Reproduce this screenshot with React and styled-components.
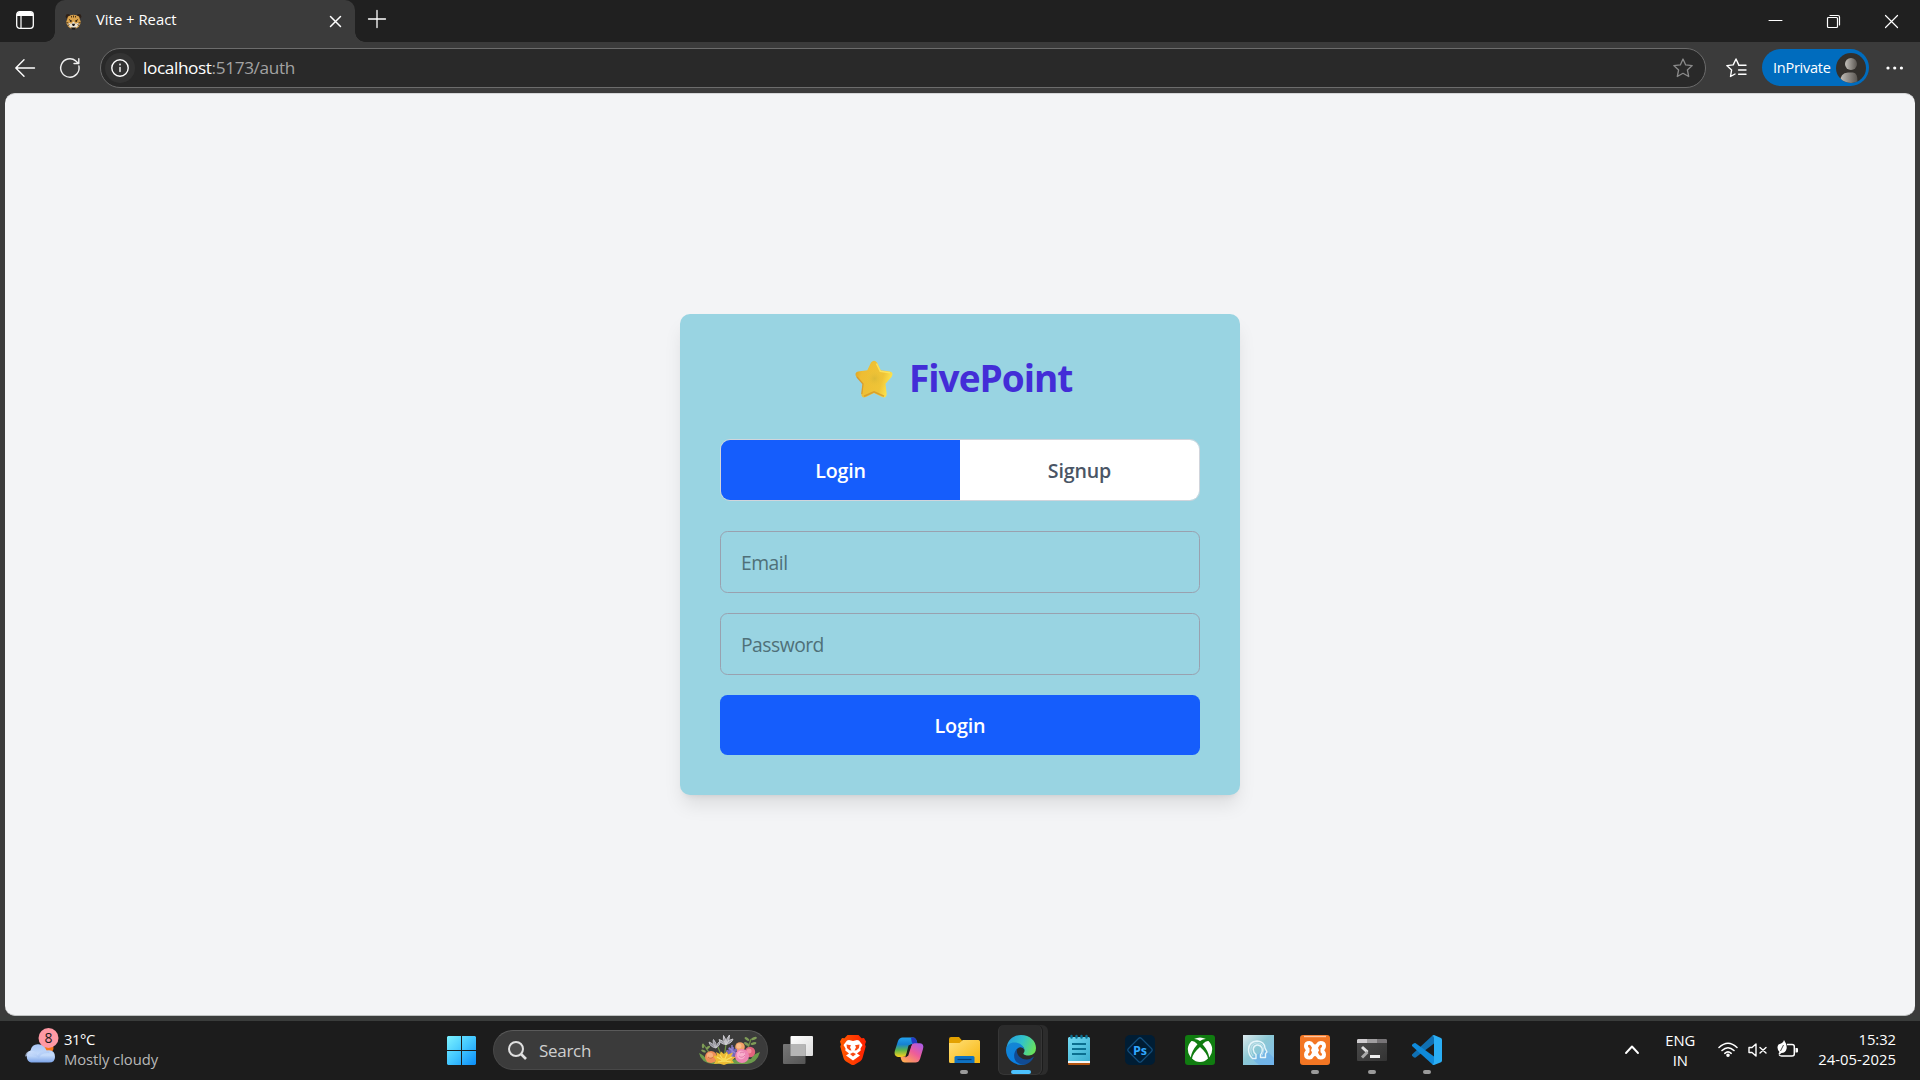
import React from "react";
import styled, { createGlobalStyle } from "styled-components";

const Global = createGlobalStyle`
  * { box-sizing: border-box; }
  html, body { margin: 0; height: 100%; overflow: hidden; background: #3b3b3b; }
  body { font-family: "Open Sans", "Noto Sans", sans-serif; }
  button, input { font: inherit; margin: 0; }
  svg { display: block; flex: none; overflow: visible; }
`;

const Screen = styled.div`
  width: 1920px;
  height: 1080px;
  display: flex;
  flex-direction: column;
  background: #3b3b3b;
`;

/* ---------- browser chrome ---------- */
const TabStrip = styled.div`
  height: 42px;
  flex: none;
  display: flex;
  background: #202020;
`;
const WorkspaceSlot = styled.div`
  width: 55px;
  padding: 11px 0 0 16px;
  background: #202020;
`;
const Tab = styled.div`
  position: relative;
  width: 300px;
  height: 42px;
  padding: 0 14px 0 10px;
  display: flex;
  align-items: center;
  background: #3b3b3b;
  border-radius: 10px 10px 0 0;
  &::before, &::after {
    content: "";
    position: absolute;
    bottom: 0;
    width: 10px;
    height: 10px;
  }
  &::before { left: -10px; background: radial-gradient(circle at 0 0, #202020 9.5px, #3b3b3b 10px); }
  &::after { right: -10px; background: radial-gradient(circle at 100% 0, #202020 9.5px, #3b3b3b 10px); }
`;
const Label = styled.span`
  white-space: pre;
  line-height: 20px;
  font-size: ${(p) => p.$size || 15}px;
  letter-spacing: ${(p) => p.$track || 0}px;
  font-weight: ${(p) => p.$weight || 400};
  color: ${(p) => p.$color || "#fff"};
`;
const TabTitle = styled(Label)`
  flex: 1;
  margin: -4px 0 0 14px;
`;
const NewTab = styled.div`
  padding: 10px 0 0 13px;
  flex: 1;
`;
const WindowControls = styled.div`
  display: flex;
  gap: 45px;
  padding: 15px 22px 0 0;
`;
const Toolbar = styled.div`
  height: 51px;
  flex: none;
  display: flex;
  align-items: center;
  padding: 0 17px 0 15px;
  background: #3b3b3b;
`;
const ReloadIcon = styled.svg`
  margin-left: 25px;
`;
const FavoritesIcon = styled.svg`
  margin-left: 20px;
`;
const AddressBar = styled.div`
  width: 1606px;
  height: 40px;
  margin-left: 20px;
  padding: 0 12px 0 4px;
  display: flex;
  align-items: center;
  background: #292929;
  border: 1px solid #6c6c6c;
  border-radius: 20px;
`;
const InfoHalo = styled.div`
  width: 30px;
  height: 30px;
  display: grid;
  place-items: center;
  border-radius: 50%;
  background: #333;
`;
const Url = styled.div`
  flex: 1;
  margin: 0 0 0 8px;
  display: flex;
`;
const PrivatePill = styled.div`
  width: 107px;
  height: 37px;
  margin: 0 17px 0 15px;
  padding: 0 3px 0 11px;
  display: flex;
  align-items: center;
  justify-content: space-between;
  border-radius: 19px;
  background: #006cbe;
`;

/* ---------- page ---------- */
const Viewport = styled.main`
  height: 923px;
  flex: none;
  margin: 0 5px;
  display: flex;
  align-items: center;
  justify-content: center;
  background: #f3f4f6;
  border-radius: 10px;
  border-top: 1px solid #d5d6d8;
  border-bottom: 1px solid #bfc2c2;
`;
const Card = styled.section`
  width: 560px;
  height: 481px;
  padding: 40px;
  display: flex;
  flex-direction: column;
  background: #99d4e2;
  border-radius: 10px;
  box-shadow: 0 12.5px 18.75px -3.75px rgba(0, 0, 0, 0.1), 0 5px 7.5px -5px rgba(0, 0, 0, 0.1);
`;
const Brand = styled.h1`
  height: 45px;
  margin: 0 0 40px;
  padding: 5px 0 0 135px;
  display: flex;
  align-items: center;
  gap: 16px;
`;
const BrandName = styled.span`
  margin-top: -4px;
  font-size: 37px;
  line-height: 45px;
  font-weight: 700;
  letter-spacing: -1px;
  color: #432dd7;
`;
const Toggle = styled.div`
  height: 62px;
  flex: none;
  display: flex;
  margin-bottom: 30px;
  border: 1px solid #d1d5dc;
  border-radius: 10px;
  overflow: hidden;
`;
const ToggleButton = styled.button`
  flex: 1;
  padding: 0;
  border: 0;
  font-size: 19.6px;
  letter-spacing: -0.15px;
  font-weight: 600;
  color: ${(p) => (p.$active ? "#fff" : "#4a5565")};
  background: ${(p) => (p.$active ? "#155dfc" : "#fff")};
`;
const Field = styled.input`
  width: 480px;
  height: 62px;
  flex: none;
  margin-bottom: 20px;
  padding: 0 20px;
  border: 1px solid #99a1af;
  border-radius: 7.5px;
  outline: 0;
  background: transparent;
  font-size: 19.3px;
  letter-spacing: -0.5px;
  &::placeholder { color: #4f7078; opacity: 1; }
`;
const Submit = styled.button`
  height: 60px;
  flex: none;
  padding: 0;
  border: 0;
  border-radius: 7.5px;
  background: #155dfc;
  color: #fff;
  font-size: 19.8px;
  font-weight: 600;
  letter-spacing: -0.2px;
`;

/* ---------- taskbar ---------- */
const Gutter = styled.div`
  height: 5px;
  flex: none;
  background: #3a3c3b;
`;
const Taskbar = styled.footer`
  height: 59px;
  flex: none;
  display: flex;
  background: #1c1c1c;
`;
const Weather = styled.div`
  width: 447px;
  padding: 6px 0 0 24px;
  display: flex;
`;
const Stack = styled.div`
  display: flex;
  flex-direction: column;
  align-items: ${(p) => p.$align || "flex-start"};
  padding-top: ${(p) => p.$top || 2}px;
  margin-left: ${(p) => p.$left || 0}px;
`;
const SearchBox = styled.div`
  width: 275px;
  height: 40px;
  margin: 9px 15px 0 17px;
  padding: 0 7px 0 14px;
  display: flex;
  align-items: center;
  border-radius: 20px;
  background: #3b3b3b;
  border: 1px solid #484848;
  border-top-color: #5a5a5a;
`;
const SearchLabel = styled(Label)`
  flex: 1;
  margin: 1px 0 0 12px;
`;
const StartButton = styled.div`
  padding-top: 15px;
`;
const AppSlot = styled.div`
  width: ${(p) => p.$w}px;
  margin-left: ${(p) => p.$gap}px;
  display: flex;
  flex-direction: column;
  align-items: center;
  padding-top: 14px;
`;
const ActiveTile = styled.div`
  width: 44px;
  height: 50px;
  margin: -10px 3px 0 0;
  padding: 10px 0 0 3px;
  display: flex;
  flex-direction: column;
  align-items: center;
  border-radius: 6px;
  border: 1px solid #363636;
  border-top-width: 0;
  background: #2b2b2b;
  box-shadow: 1px 0 0 #1c1c1c, 6px 0 0 0 #2c2c2c;
`;
const Indicator = styled.div`
  width: ${(p) => (p.$wide ? 20 : 8)}px;
  height: 4px;
  margin-top: 5px;
  border-radius: 2px;
  background: ${(p) => (p.$wide ? "#4cc2ff" : "#9a9a9a")};
`;
const Tray = styled.div`
  margin-left: auto;
  padding-right: 24px;
  display: flex;
`;
const TrayIcon = styled.div`
  padding-top: ${(p) => p.$top}px;
  margin-left: ${(p) => p.$left}px;
`;

/* ---------- icons ---------- */
const Line = ({ w, h, d, sw = 1.4, c = "#fff", children }) => (
  <svg width={w} height={h} viewBox={`0 0 ${w} ${h}`} fill="none" stroke={c} strokeWidth={sw} strokeLinecap="round" strokeLinejoin="round">
    {d && <path d={d} />}
    {children}
  </svg>
);

const Leopard = () => (
  <svg width="17" height="17" viewBox="0 0 17 17">
    <circle cx="3" cy="3.4" r="2.4" fill="#2e2119" />
    <circle cx="14" cy="3.4" r="2.4" fill="#2e2119" />
    <path d="M3 3.5Q8.500 0 14 3.500L15.800 9Q15 14 11 15.500H6Q2 14 1.200 9Z" fill="#d9a24b" />
    <path d="M2.600 10.500Q5 9.500 6 11L8.500 8.500 11 11Q12 9.500 14.400 10.500 13 14.500 8.500 15.500 4 14.500 2.600 10.500Z" fill="#e9e0cf" />
    <path d="M4 6.500l2 1.200M13 6.500l-2 1.200M1.500 9.500l2 .6M15.500 9.500l-2 .6M2.500 12.500l2-.8M14.500 12.500l-2-.8M6.500 3v1.500M10.500 3v1.500M8.500 2.500v2" stroke="#4a3216" strokeWidth="1" />
    <circle cx="5.800" cy="8" r="1" fill="#342613" />
    <circle cx="11.200" cy="8" r="1" fill="#342613" />
    <path d="M6.800 10.800h3.400L9.200 13H7.800ZM6 14.500h5l-1 1.900H7Z" fill="#1c1916" />
  </svg>
);

const Avatar = () => (
  <svg width="30" height="30" viewBox="0 0 30 30">
    <defs>
      <linearGradient id="av" x1="0" x2="1"><stop offset="0" stopColor="#c4c0ba" /><stop offset="1" stopColor="#5a5651" /></linearGradient>
      <clipPath id="avc"><circle cx="15" cy="15" r="15" /></clipPath>
    </defs>
    <circle cx="15" cy="15" r="15" fill="#33302c" />
    <g clipPath="url(#avc)" fill="url(#av)">
      <circle cx="15" cy="11" r="6" />
      <path d="M4 30Q4 19.500 12 19.500H17Q22 19.500 21.500 30Z" />
    </g>
  </svg>
);

const GoldStar = () => (
  <svg width="38" height="38" viewBox="0 0 38 38">
    <defs>
      <linearGradient id="gs" x1="0" y1="0" x2="1" y2="0.300"><stop offset="0" stopColor="#d99b20" /><stop offset="0.250" stopColor="#eebd33" /><stop offset="0.800" stopColor="#efc437" /><stop offset="1" stopColor="#fbe04a" /></linearGradient>
      <radialGradient id="gc"><stop offset="0" stopColor="#dcb936" /><stop offset="1" stopColor="#efc437" stopOpacity="0" /></radialGradient>
    </defs>
    <path d="M16 2.500Q19 -1.200 22 2.500L25.700 10.300 35 11.600Q39.200 13 36.500 17L30.500 23.800 31.700 34Q31.200 38.800 27 37L19 33 11 37Q6.800 38.800 6.300 34L7.500 23.800 1.300 17Q-1 13 3 11.600L12.300 10.300Z" fill="url(#gs)" />
    <path d="M6.800 34L8 24 2 17" fill="none" stroke="#d08f2a" strokeWidth="1.300" opacity="0.700" />
    <path d="M9 36.300L19 31.800 29 36.300" fill="none" stroke="#cf9129" strokeWidth="1.500" opacity="0.700" />
    <path d="M21.500 3.500L25.300 11.200 35 12.700" fill="none" stroke="#ffe862" strokeWidth="1.600" opacity="0.800" />
    <circle cx="19.500" cy="18.500" r="9" fill="url(#gc)" />
  </svg>
);

const WeatherIcon = () => (
  <svg width="36" height="38" viewBox="0 0 36 38">
    <defs>
      <linearGradient id="cl" x1="0" y1="0" x2="0" y2="1"><stop offset="0" stopColor="#a9c6f5" /><stop offset="0.600" stopColor="#c6dcfb" /><stop offset="1" stopColor="#7ba3e8" /></linearGradient>
      <linearGradient id="cl2" x1="0" y1="0" x2="1" y2="1"><stop offset="0" stopColor="#dbe9ff" /><stop offset="1" stopColor="#8fb3ef" /></linearGradient>
    </defs>
    <circle cx="23.500" cy="21" r="6" fill="#f7761b" />
    <path d="M7 35.500A6.500 6.500 0 0 1 6.500 23.500Q8 17 14 17.200 20 17 22.500 23.500 31 22 31 30 31 35.500 25 35.500Z" fill="url(#cl)" />
    <path d="M1 29.500Q2 24 7 23.800 12 24 13.500 28 17 23.500 22 23.600 27 24.500 25 26 17 25.500 15 31 10 27 1 29.500Z" fill="url(#cl2)" opacity="0.700" />
    <circle cx="24.500" cy="11" r="10" fill="#ff99a4" />
    <text x="24.600" y="16" textAnchor="middle" fontSize="14" fontFamily="Open Sans" fill="#1a1a1a">8</text>
  </svg>
);

const WindowsLogo = () => (
  <svg width="29" height="29" viewBox="0 0 29 29">
    <defs><linearGradient id="wl" x1="0" y1="0" x2="29" y2="29" gradientUnits="userSpaceOnUse"><stop offset="0" stopColor="#7df3ff" /><stop offset="0.500" stopColor="#42c6ff" /><stop offset="1" stopColor="#0a8cf7" /></linearGradient></defs>
    <path d="M1 0H14V14H0V1ZM15 0H28L29 1V14H15ZM0 15H14V29H1L0 28ZM15 15H29V28L28 29H15Z" fill="url(#wl)" />
  </svg>
);

const petals = (cx, cy, r, n, color, w = 2) =>
  Array.from({ length: n }, (_, i) => {
    const a = (i / n) * Math.PI * 2;
    return <line key={`${cx}-${i}`} x1={cx} y1={cy} x2={cx + Math.cos(a) * r} y2={cy + Math.sin(a) * r} stroke={color} strokeWidth={w} strokeLinecap="round" />;
  });

const Bouquet = () => (
  <svg width="61" height="30" viewBox="0 0 61 30">
    <path d="M0 18Q2 28 14 29H48Q58 28 61 17 54 19 52 24L8 25Q5 20 0 18Z" fill="#6c9a4c" />
    <path d="M19 12L24 25M27 9L25 24M52 4L46 22M5 10L13 22" stroke="#6d8f45" strokeWidth="1.300" fill="none" />
    <g fill="#7f9c58">
      <ellipse cx="48" cy="4" rx="2.800" ry="1.300" transform="rotate(35 48 4)" />
      <ellipse cx="55" cy="3.500" rx="3" ry="1.300" transform="rotate(-20 55 3.500)" />
      <ellipse cx="54.500" cy="8.500" rx="3" ry="1.300" transform="rotate(-15 54.500 8.500)" />
      <ellipse cx="47.500" cy="9" rx="2.800" ry="1.300" transform="rotate(30 47.500 9)" />
      <ellipse cx="4" cy="11" rx="1.200" ry="2.400" />
      <ellipse cx="9" cy="12.500" rx="2.500" ry="1.200" transform="rotate(-35 9 12.500)" />
      <ellipse cx="4.500" cy="16" rx="2.500" ry="1.200" transform="rotate(25 4.500 16)" />
    </g>
    <path d="M17 13Q11 12 10 7 14 8 17 13 13 7 14.500 4.500 18 8 17 13 18 8 21 6 22 10 17 13Z" fill="#8f8e98" stroke="#c3c2c8" strokeWidth="0.900" />
    <path d="M27 9.500Q21 9 20 4.500 24 5 27 9.500 23 4 24.500 .5 27 3 27 9.500 27 3 30.500 0 31 5 27 9.500 30 4 34 4 33 8 27 9.500Z" fill="#9c9ba4" stroke="#d0cfd4" strokeWidth="0.900" />
    <circle cx="41" cy="12" r="4.800" fill="#f2a067" /><circle cx="40" cy="11" r="2.500" fill="#f8bc89" />
    {petals(33, 18, 5, 9, "#7767b8", 2.600)}
    <path d="M33 10v15M30 13l6 5" stroke="#9587d5" strokeWidth="1.300" />
    <circle cx="12" cy="22" r="6" fill="#ee8d58" /><circle cx="11" cy="20.500" r="3" fill="#f7b07e" /><path d="M9 22q3 3 6-1" stroke="#cf6e43" fill="none" />
    <circle cx="51" cy="17" r="5.200" fill="#e2647d" /><circle cx="50" cy="16" r="2.500" fill="#f391a2" />
    <circle cx="43" cy="21" r="7" fill="#ee86b4" /><circle cx="42" cy="20" r="4.200" fill="#f8afcc" /><path d="M40 21q3 3 6-1M41 18q2-2 4 0" stroke="#dc6ca2" strokeWidth="0.800" fill="none" />
    <path d="M14 21L18 20.500 17 17 21 19 22 16.500 25 19 28 16.500 29 19.500 34 17.500 32 21.500 37 22 33 25 35 28 29 28.500 25 30 20 28.500 15 29 17 25Z" fill="#eebc35" />
    <path d="M18 22l7 4M21 20l4 6M28 19l-3 7M33 22l-8 4M19 27l6-1M32 27l-7-1" stroke="#fae06a" strokeWidth="1.100" />
    <ellipse cx="25" cy="25" rx="3" ry="2" fill="#f8d954" />
  </svg>
);

const TaskView = () => (
  <svg width="30" height="30" viewBox="0 0 30 30">
    <defs><linearGradient id="tv" x1="0" y1="0" x2="1" y2="1"><stop offset="0" stopColor="#fff" /><stop offset="1" stopColor="#dcdcdc" /></linearGradient>
      <linearGradient id="tv2" x1="0" y1="0" x2="1" y2="1"><stop offset="0" stopColor="#777" /><stop offset="1" stopColor="#555" /></linearGradient></defs>
    <rect x="7.500" y="1" width="22.500" height="20" rx="1" fill="url(#tv)" />
    <rect x="0" y="9" width="22.500" height="20" rx="1" fill="url(#tv2)" />
    <rect x="7.500" y="9" width="15" height="12" fill="#b6b6b6" />
  </svg>
);

const Brave = () => (
  <svg width="30" height="30" viewBox="0 0 30 30">
    <defs><linearGradient id="br" x1="0" x2="1"><stop offset="0" stopColor="#ff5a00" /><stop offset="1" stopColor="#ff1f00" /></linearGradient></defs>
    <path d="M9.500 0H20.500L23.500 3.200 26 3 28 6.500 27 9.500 27.700 11.500 24.500 23Q24 25 22.300 26.200L16.500 29.700Q15 30.500 13.500 29.700L7.700 26.200Q6 25 5.500 23L2.300 11.500 3 9.500 2 6.500 4 3 6.500 3.200Z" fill="url(#br)" />
    <path d="M11 5L15 6 19 5 21 5.500 24.500 10 22.500 13.500 22.700 15.500 19 18.500 22 20.500 15 25.500 8 20.500 11 18.500 7.300 15.500 7.500 13.500 5.500 10 9 5.500Z" fill="#fff" />
    <path d="M8.500 9.500L13 10.300 12 12.200 13.500 15.500 11.500 15.200 9 13ZM21.500 9.500L17 10.300 18 12.200 16.500 15.500 18.500 15.200 21 13ZM12 19L15 17.500 18 19 15 21.500Z" fill="#f94a15" />
  </svg>
);

const Copilot = () => (
  <svg width="30" height="30" viewBox="0 0 30 30">
    <defs>
      <linearGradient id="ca" x1="0" y1="0" x2="0" y2="1"><stop offset="0" stopColor="#23a3ef" /><stop offset="0.350" stopColor="#1681d3" /><stop offset="0.650" stopColor="#5cb44b" /><stop offset="1" stopColor="#ffd21c" /></linearGradient>
      <linearGradient id="cb" x1="1" y1="0" x2="0.200" y2="1"><stop offset="0" stopColor="#a15bf0" /><stop offset="0.500" stopColor="#ee5c9a" /><stop offset="1" stopColor="#ffab52" /></linearGradient>
    </defs>
    <path d="M8.500 2.500H19Q22 2.500 23 7L23.500 9H18.500Q16 9 15 12L12.500 19.500Q11.500 22 8.500 22H4Q-.5 21 .8 16L4 6Q5.300 2.500 8.500 2.500Z" fill="url(#ca)" />
    <path d="M17 2.500H19Q22 2.500 23 7L24 10H20.500Q18.500 10 17.500 6Z" fill="#2439c5" />
    <path d="M21.500 27.500H11Q8 27.500 7 24L6.500 21.800H10Q13 21.800 14 19L17 11Q18 8.300 20.500 8.300H26Q30.500 9 29 14L26 24Q24.700 27.500 21.500 27.500Z" fill="url(#cb)" />
    <path d="M14.500 10.500L17.800 9.300 14.300 20.500 11.500 22.500Z" fill="#1c1c1c" />
  </svg>
);

const Explorer = () => (
  <svg width="31" height="30" viewBox="0 0 31 30">
    <defs><linearGradient id="fe" x1="0" y1="0" x2="1" y2="1"><stop offset="0" stopColor="#ffe07a" /><stop offset="1" stopColor="#f7b50c" /></linearGradient></defs>
    <path d="M0 4Q0 2 2 2H10L13 5.500H30V12H0Z" fill="#e3a100" />
    <path d="M0 8H10.500L14 5H29.500Q31 5 31 6.500V28H1.500Q0 28 0 26.500Z" fill="url(#fe)" />
    <path d="M5.500 28V22.500Q5.500 21 7 21H24Q25.500 21 25.500 22.500V28Z" fill="#0f72c2" />
    <path d="M8.500 24.500H22.500" stroke="#053f79" strokeWidth="1.200" />
  </svg>
);

const Edge = () => (
  <svg width="30" height="30" viewBox="0 0 30 30">
    <defs>
      <linearGradient id="e1" x1="0" y1="0.300" x2="1" y2="0.600"><stop offset="0" stopColor="#259fe0" /><stop offset="0.500" stopColor="#32c3c8" /><stop offset="1" stopColor="#6ae359" /></linearGradient>
      <linearGradient id="e2" x1="0" y1="0" x2="0.400" y2="1"><stop offset="0" stopColor="#1687d0" /><stop offset="1" stopColor="#087ee4" /></linearGradient>
    </defs>
    <path d="M.5 13C1.500 4.500 8 0 15 0 24 0 30 6 30 13Q30 20 23 20.500 18 20.500 17.300 18.500C19 17 19 14 17 12 11 6 3 9 .5 13Z" fill="url(#e1)" />
    <path d="M0 15C0 9 6 6.500 11 7.800Q17.500 9.500 18.500 15 17 11.500 13 12.500 8 15 9.500 21 11.500 27.500 19 29.500 11 31 5 26 0 21.500 0 15Z" fill="url(#e2)" />
    <path d="M11.500 13.500C9 18 14 25 21 24.500Q25 24 28 21.500C26 26 22 30 17 29.800 10 29 7 23.500 8.500 18Q9.300 15 11.500 13.500Z" fill="#114b93" />
  </svg>
);

const Notepad = () => (
  <svg width="22" height="30" viewBox="0 0 22 30">
    <defs><linearGradient id="np" x1="0" y1="0" x2="1" y2="1"><stop offset="0" stopColor="#72d9f2" /><stop offset="1" stopColor="#3aaecf" /></linearGradient></defs>
    <rect y="20" width="22" height="10" rx="1" fill="#b4540f" />
    <rect y="18" width="22" height="10" fill="#f5f5f5" />
    <path d="M1 2H21L22 3V26H0V3Z" fill="url(#np)" />
    <path d="M3.500 1V2.500M8.500 1V2.500M13.500 1V2.500M18.500 1V2.500" stroke="#0b6f90" strokeWidth="2.400" strokeLinecap="round" />
    <path d="M4 9H18M4 14H18M4 19H18" stroke="#0b6f90" strokeWidth="1.900" />
  </svg>
);

const Photoshop = () => (
  <svg width="30" height="30" viewBox="0 0 30 30">
    <rect width="30" height="30" rx="5" fill="#001d34" />
    <path d="M13.500 3.500Q15 2 16.500 3.500L26.500 13.500Q28 15 26.500 16.500L16.500 26.500Q15 28 13.500 26.500L3.500 16.500Q2 15 3.500 13.500Z" fill="none" stroke="#124e7c" strokeWidth="1.200" />
    <text x="15" y="19.500" textAnchor="middle" fontFamily="Open Sans" fontWeight="700" fontSize="12.500" fill="#31a8ff">Ps</text>
  </svg>
);

const Xbox = () => (
  <svg width="30" height="30" viewBox="0 0 30 30">
    <rect width="30" height="30" rx="3" fill="#107c10" />
    <path d="M9 4Q15 1 21 4 18 3.800 15 6 12 3.800 9 4ZM6.500 6Q9 5.500 12.500 9.200 6.500 16 5.700 22.500 2.600 18.500 2.800 14 3.200 9 6.500 6ZM23.500 6Q21 5.500 17.500 9.200 23.500 16 24.300 22.500 27.400 18.500 27.200 14 26.800 9 23.500 6ZM15 12Q22 18 23 23.500 19.500 27 15 27 10.500 27 7 23.500 8 18 15 12Z" fill="#fff" />
  </svg>
);

const HeadApp = () => (
  <svg width="31" height="30" viewBox="0 0 31 30">
    <defs><linearGradient id="ha" x1="0" y1="0" x2="1" y2="1"><stop offset="0" stopColor="#dce9ec" /><stop offset="0.450" stopColor="#8cc8d4" /><stop offset="1" stopColor="#7fbdf0" /></linearGradient></defs>
    <rect width="31" height="30" fill="url(#ha)" />
    <path d="M23 15L31 23V30H16L8 23Z" fill="#63a9ea" opacity="0.550" />
    <path d="M9.500 23.500Q5.500 20 5.500 14.500 6 6.500 14 6 21.500 6.500 22 13L24 17 22.500 18.500V22.500H17.500V19.500Q20 17 19 13 17.500 9.800 14 10 10.300 11 10.300 14.500 10.500 18 13 19.500V23.500Z" fill="none" stroke="#e6f5fa" strokeWidth="1.400" strokeLinejoin="round" />
    <path d="M10 21Q7.500 18 7.800 14.500 8.500 8.300 14 8 20.300 8.500 20.500 14 20.500 18 19 20.500" fill="none" stroke="#c9e7f1" strokeWidth="0.800" />
  </svg>
);

const Xampp = () => (
  <svg width="30" height="30" viewBox="0 0 30 30">
    <rect width="30" height="30" rx="3" fill="#f37623" />
    <path d="M4 1.500H26" stroke="#ffc39c" strokeWidth="1.400" />
    <path d="M9.500 6Q12.500 6 13.500 8.500 15 10.500 16.500 8.500 17.500 6 20.500 6 26 6 26 11 26 13.500 24.200 15.200 26 17 26 19.500 26 24.500 20.500 24.500 17.500 24.500 16.500 22 15 20 13.500 22 12.500 24.500 9.500 24.500 4 24.500 4 19.500 4 17 5.800 15.200 4 13.500 4 11 4 6 9.500 6Z" fill="#fff" />
    <path d="M8 10.200Q9.500 9 10.800 10.700L12.300 13.300H17.700L19.200 10.700Q20.500 9 22 10.200 22.500 12 20.500 13.200V17.200Q22.500 18.500 22 20.300 20.500 21.500 19.200 19.800L17.700 17.200 19.200 15.200 17.700 13.300 15 13.300 12.300 13.300 10.800 15.200 12.300 17.200 10.800 19.800Q9.500 21.500 8 20.300 7.500 18.500 9.500 17.200V13.200Q7.500 12 8 10.200Z" fill="#f37623" />
    <rect x="11.800" y="12.300" width="6.400" height="5.900" rx="1" fill="#fff" />
  </svg>
);

const Terminal = () => (
  <svg width="30" height="30" viewBox="0 0 30 30">
    <defs><linearGradient id="te" x1="0" y1="0" x2="1" y2="1"><stop offset="0" stopColor="#4b4b4b" /><stop offset="1" stopColor="#333" /></linearGradient></defs>
    <rect y="4" width="30" height="22" rx="1" fill="url(#te)" />
    <path d="M1 4H10V8H0V5Z" fill="#cfcccf" /><path d="M10 4H20V8H10Z" fill="#a09ea0" /><path d="M20 4H29L30 5V8H20Z" fill="#777477" />
    <path d="M5 12L10.500 17.200" stroke="#e0e0e0" strokeWidth="3" /><path d="M10.500 17L5 22.500" stroke="#a9a9a9" strokeWidth="3" />
    <path d="M13 21.500H23" stroke="#eee" strokeWidth="3" />
  </svg>
);

const VSCode = () => (
  <svg width="30" height="30" viewBox="0 0 30 30">
    <path d="M22 8.500L3.300 22.800 2 22.600 0 20.700V19.500L20 1 22 0Z" fill="#1070b3" />
    <path d="M0 9.800L2 8.200 3.300 8 22 21.500V30L20 29 0 11Z" fill="#0f8ada" />
    <path d="M22 0L29 3Q30 3.500 30 5V25.500Q30 26.700 29 27.200L22 30Q21 30 20 29 22 29.500 22 27V3Q22 .5 20 1Z" fill="#2aaef5" />
  </svg>
);

const apps = [
  { icon: <TaskView />, w: 30, gap: 0 },
  { icon: <Brave />, w: 30, gap: 25 },
  { icon: <Copilot />, w: 30, gap: 26 },
  { icon: <Explorer />, w: 30, gap: 25, open: true },
  { icon: <Edge />, w: 30, gap: 27, active: true },
  { icon: <Notepad />, w: 22, gap: 32 },
  { icon: <Photoshop />, w: 30, gap: 35 },
  { icon: <Xbox />, w: 30, gap: 30 },
  { icon: <HeadApp />, w: 31, gap: 28 },
  { icon: <Xampp />, w: 30, gap: 26, open: true },
  { icon: <Terminal />, w: 30, gap: 27, open: true },
  { icon: <VSCode />, w: 30, gap: 25, open: true },
];

export default function App() {
  return (
    <Screen>
      <Global />
      <TabStrip>
        <WorkspaceSlot>
          <svg width="18" height="18" viewBox="0 0 18 18">
            <rect x="0.700" y="0.700" width="16.600" height="16.600" rx="3" fill="none" stroke="#fff" strokeWidth="1.300" />
            <path d="M1 5V3.500Q1 1 3.500 1H14.500Q17 1 17 3.500V5Z" fill="#fff" />
            <path d="M5 5V17" stroke="#fff" strokeWidth="1.200" />
          </svg>
        </WorkspaceSlot>
        <Tab>
          <Leopard />
          <TabTitle $size={14.8} $track={0.02}>Vite + React</TabTitle>
          <Line w={11} h={11} d="M.5 .5L10.500 10.500M10.500 .5L.5 10.500" sw={1.5} />
        </Tab>
        <NewTab>
          <Line w={18} h={18} d="M9 .5V17.500M.5 9H17.500" sw={1.3} />
        </NewTab>
        <WindowControls>
          <Line w={13} h={13} d="M0 5.500H13" sw={1} />
          <Line w={13} h={13} sw={1.2}>
            <rect x="0.500" y="2.500" width="10" height="10" rx="1" />
            <path d="M3 .5H11Q12.500 .5 12.500 2V10" />
          </Line>
          <Line w={13} h={13} d="M.5 .5L12.500 12.500M12.500 .5L.5 12.500" sw={1.2} />
        </WindowControls>
      </TabStrip>

      <Toolbar>
        <Line w={20} h={18} d="M19.500 9H1M9 .8L.8 9 9 17.200" sw={1.4} />
        <ReloadIcon width="20" height="20" viewBox="0 0 20 20" fill="none" stroke="#f0f0f0" strokeWidth="1.400" strokeLinecap="round" strokeLinejoin="round">
          <path d="M18.900 8A9.200 9.200 0 1 1 15.800 2.900L18.600 5.400M18.800 .8V5.500H14" />
        </ReloadIcon>
        <AddressBar>
          <InfoHalo>
            <Line w={18} h={18} sw={1.4}>
              <circle cx="9" cy="9" r="8.200" />
              <path d="M9 8.500V12.500" />
              <circle cx="9" cy="5.600" r="0.300" />
            </Line>
          </InfoHalo>
          <Url>
            <Label $size={17.2} $track={-0.38}>localhost</Label>
            <Label $size={17.2} $track={-0.36} $color="#a3a3a3">:5173/auth</Label>
          </Url>
          <Line w={20} h={20} c="#8a8a8a" sw={1.3} d="M10 1L12.700 6.900 19.200 7.600 14.400 12 15.700 18.500 10 15.300 4.300 18.500 5.600 12 .8 7.600 7.300 6.900Z" />
        </AddressBar>
        <FavoritesIcon width="21" height="20" viewBox="0 0 21 20" fill="none" stroke="#fff" strokeWidth="1.400" strokeLinecap="round" strokeLinejoin="round">
          <path d="M9 16L4.500 18.500 5.600 12 .8 7.600 7.200 6.900 10 1 12.600 6.600M12.600 7.200H20M12.600 12H20M12.600 16.200H20" />
        </FavoritesIcon>
        <PrivatePill>
          <Label $size={14.5} $track={-0.25} $weight={500}>InPrivate</Label>
          <Avatar />
        </PrivatePill>
        <svg width="17" height="4" viewBox="0 0 17 4" fill="#fff">
          <circle cx="2" cy="2" r="1.600" /><circle cx="8.700" cy="2" r="1.600" /><circle cx="15.400" cy="2" r="1.600" />
        </svg>
      </Toolbar>

      <Viewport>
        <Card>
          <Brand>
            <GoldStar />
            <BrandName>FivePoint</BrandName>
          </Brand>
          <Toggle>
            <ToggleButton $active>Login</ToggleButton>
            <ToggleButton>Signup</ToggleButton>
          </Toggle>
          <Field placeholder="Email" />
          <Field placeholder="Password" />
          <Submit>Login</Submit>
        </Card>
      </Viewport>
      <Gutter />

      <Taskbar>
        <Weather>
          <WeatherIcon />
          <Stack $left={4} $top={2}>
            <Label $size={14.8} $track={-0.4}>31°C</Label>
            <Label $size={14.8} $track={-0.06} $color="#b8b8b8">Mostly cloudy</Label>
          </Stack>
        </Weather>
        <StartButton><WindowsLogo /></StartButton>
        <SearchBox>
          <svg width="19" height="19" viewBox="0 0 19 19" fill="none" stroke="#e0e0e0" strokeWidth="2">
            <circle cx="8" cy="8" r="7" fill="#4c4c4c" /><path d="M13 13L18 18" strokeWidth="2.600" />
          </svg>
          <SearchLabel $size={17} $track={-0.3} $color="#cfcfcf">Search</SearchLabel>
          <Bouquet />
        </SearchBox>
        {apps.map((a, i) => (
          <AppSlot key={i} $w={a.w} $gap={a.gap}>
            {a.active ? <ActiveTile>{a.icon}<Indicator $wide /></ActiveTile> : a.icon}
            {a.open && <Indicator />}
          </AppSlot>
        ))}
        <Tray>
          <TrayIcon $top={24} $left={0}><Line w={14} h={9} d="M1 8L7 1.500 13 8" sw={1.9} /></TrayIcon>
          <Stack $align="center" $top={9} $left={26}>
            <Label $size={14.8} $track={-0.1}>ENG</Label>
            <Label $size={14.8} $track={-0.1}>IN</Label>
          </Stack>
          <TrayIcon $top={21} $left={23}>
            <Line w={20} h={15} sw={1.6}>
              <path d="M1 5.500Q10 -3 19 5.500M4 8.500Q10 3 16 8.500M6.800 11.300Q10 8.500 13.200 11.300" />
              <circle cx="10" cy="13.300" r="1" fill="#fff" />
            </Line>
          </TrayIcon>
          <TrayIcon $top={22} $left={10}>
            <Line w={19} h={14} sw={1.4} d="M1 4.500V9.500H4L8 13V1L4 4.500ZM12 4.500L18 10M18 4.500L12 10" />
          </TrayIcon>
          <TrayIcon $top={19} $left={10}>
            <svg width="21" height="17" viewBox="0 0 21 17">
              <path d="M10 4.500H15Q17.300 4.500 17.300 6.500V14Q17.300 16 15 16H4.500Q2.500 16 2.300 14.500" fill="none" stroke="#fff" strokeWidth="1.500" />
              <path d="M18.500 8H20Q21 8 21 9V11.500Q21 12.500 20 12.500H18.500Z" fill="#fff" />
              <path d="M7 0Q10.500 5 9.500 9 8.500 13 4.500 13L2.500 14.500 1.500 13.500 2.500 12Q-1 8 1.500 4.500 3.500 3.800 5 3 6.500 2 7 0Z" fill="#fff" />
              <path d="M6.500 5L3.500 11" stroke="#1c1c1c" strokeWidth="0.800" />
            </svg>
          </TrayIcon>
          <Stack $align="flex-end" $top={8} $left={20}>
            <Label $size={14.8} $track={-0.05}>15:32</Label>
            <Label $size={14.8} $track={0.06}>24-05-2025</Label>
          </Stack>
        </Tray>
      </Taskbar>
    </Screen>
  );
}
